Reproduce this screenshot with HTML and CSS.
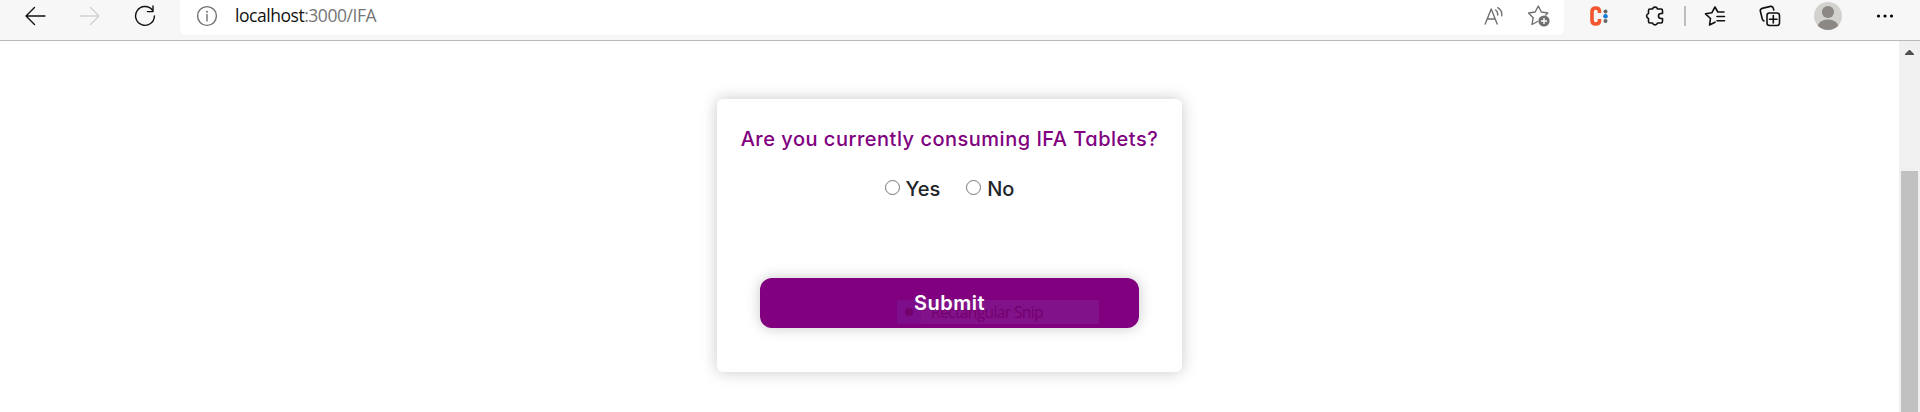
FILE: index.html
```
<!DOCTYPE html>
<html lang="en">
<head>
<meta charset="utf-8">
<title>IFA</title>
<link rel="stylesheet" href="styles.css">
</head>
<body>
<header class="toolbar">
  <nav class="nav">
    <span class="cell"><svg width="22" height="20" viewBox="0 0 22 20"><path class="ink" d="M10.500 1.500L2 10l8.500 8.500M2 10h19"/></svg></span>
    <span class="cell"><svg width="22" height="20" viewBox="0 0 22 20"><path class="pale" d="M11.500 1.500L20 10l-8.500 8.500M20 10H1"/></svg></span>
    <span class="cell"><svg width="22" height="22" viewBox="0 0 22 22"><path class="ink" d="M18.300 5A9.400 9.400 0 1 0 20.400 11M19 1v5.600h-5.600"/></svg></span>
  </nav>
  <div class="address">
    <svg class="info" width="22" height="22" viewBox="0 0 22 22"><circle class="gray" cx="11" cy="11" r="9.400"/><path class="gray" d="M11 9.500V16"/><circle cx="11" cy="6.700" r="1" fill="#707070"/></svg>
    <span class="url">localhost<span class="path">:3000/IFA</span></span>
    <svg class="read" width="22" height="20" viewBox="0 0 22 20"><path class="gray" d="M2.200 18L8.200 3l6 15M4.300 13h7.800M12.500 4q2.500 1.500 2.200 5M14.800 1.700q4.500 2.800 4 8"/></svg>
    <svg class="star" width="24" height="24" viewBox="0 0 24 24"><path class="gray" d="M10.500 17.500L5 20.500l1.200-6.800L1.500 9l6.700-1L11.300 2l3 6 6.500 1-2 2"/><circle cx="17" cy="17" r="5.600" fill="#707070"/><path d="M17 14v6M14 17h6" stroke="#fff" stroke-width="1.400"/></svg>
  </div>
  <div class="tools">
    <span class="cell"><svg width="20" height="22" viewBox="0 0 20 22"><path d="M10.500 8V6.500Q10.500 3 6.800 3Q3 3 3 6.500v9Q3 19 6.800 19q3.700 0 3.700-3.500V14" fill="none" stroke="#f4562e" stroke-width="3.600"/><circle cx="16.500" cy="6.500" r="2" fill="#666"/><circle cx="16.500" cy="11.300" r="2.300" fill="#167bd8"/><circle cx="16.500" cy="16" r="2" fill="#666"/></svg></span>
    <span class="cell"><svg width="22" height="22" viewBox="0 0 22 22"><path class="ink bold" d="M6 4h2.500a2.600 2.600 0 0 1 5 0H17q1.500 0 1.500 1.500v3H17a2.500 2.500 0 0 0 0 5h1.500v3q0 1.500-1.500 1.500h-3.500a2.600 2.600 0 0 1-5 0H6q-1.500 0-1.500-1.500v-3a2.600 2.600 0 0 1 0-5v-3Q4.500 4 6 4"/></svg></span>
    <i class="divider"></i>
    <span class="cell"><svg width="22" height="22" viewBox="0 0 22 22"><path class="ink bold" d="M11 17.200L5.500 20l1-6.500L1.500 8.800l6.300-1L11 2l2.800 5H20M13 11.500h7.500M13 15.800h7.500"/></svg></span>
    <span class="cell mid"><svg width="22" height="22" viewBox="0 0 22 22"><rect class="ink bold" x="8" y="8" width="12.500" height="12.500" rx="2.500"/><path class="ink bold" d="M14.300 10.500v7.500M10.500 14.300H18M5 16Q3.700 15.500 3.300 14L1.300 6Q1 4 3 3.400l8.500-2q2-.4 2.700 1.600L14.800 5"/></svg></span>
    <span class="cell wide"><svg width="28" height="28" viewBox="0 0 28 28"><defs><clipPath id="disc"><circle cx="14" cy="14" r="14"/></clipPath></defs><g clip-path="url(#disc)"><rect width="28" height="28" fill="#d3d2ce"/><circle cx="14" cy="10" r="6.100" fill="#8b8885"/><ellipse cx="14" cy="25" rx="10.500" ry="7.500" fill="#8b8885"/></g></svg></span>
    <span class="cell mid"><svg width="18" height="4" viewBox="0 0 18 4"><circle cx="2.500" cy="2" r="1.600"/><circle cx="9" cy="2" r="1.600"/><circle cx="15.500" cy="2" r="1.600"/></svg></span>
  </div>
</header>
<div class="viewport">
  <main class="page">
    <form class="card">
      <h1 class="question">Are you currently consuming IFA Tablets?</h1>
      <div class="options">
        <label class="option"><input class="radio" type="radio" name="ifa"><span class="yes">Yes</span></label>
        <label class="option"><input class="radio" type="radio" name="ifa"><span class="no">No</span></label>
      </div>
      <button class="submit" type="button"><span class="snip"><i class="mark"></i><span class="snip-text">Rectangular Snip</span></span><span class="label">Submit</span></button>
    </form>
  </main>
  <aside class="scrollbar"><svg class="arrow" width="9" height="5" viewBox="0 0 9 5"><path d="M0 5V4L4 0h1l4 4v1z" fill="#505050"/></svg><div class="thumb"></div></aside>
</div>
</body>
</html>
```
FILE: styles.css
```
* { box-sizing: border-box; }
body { margin: 0; height: 412px; overflow: hidden; background: #fff; display: flex; flex-direction: column; }
svg { display: block; flex: none; }
.ink, .pale, .gray { fill: none; stroke-width: 1.4; stroke-linejoin: round; stroke-linecap: round; }
.ink { stroke: #111; }
.ink.bold { stroke-width: 1.6; }
.pale { stroke: #d2d2d2; }
.gray { stroke: #707070; }

.toolbar { height: 41px; flex: none; display: flex; align-items: flex-start; background: #f7f7f7; border-bottom: 1px solid #b8b8b8; padding: 0 7px; }
.nav, .tools { display: flex; flex: none; height: 31px; align-items: center; }
.nav { width: 173px; }
.tools { margin-left: 7px; }
.cell { width: 56px; display: flex; justify-content: center; flex: none; }
.nav .cell { width: 55px; }
.cell.mid { width: 54px; }
.cell.wide { width: 61px; }
.divider { width: 2px; height: 20px; margin: 0 1px; background: #bdbdbd; }
.address { width: 1384px; flex: none; height: 35px; padding: 0 13px 4px 16px; display: flex; align-items: center; background: #fff; border-radius: 0 0 5px 5px; box-shadow: 0 0 2px #eee; }
.url { margin-left: 17px; font: 17.500px/24px "Open Sans", "Noto Sans", sans-serif; letter-spacing: -0.46px; color: #111; flex: 1; margin-top: -1px; }
.path { color: #767676; }
.star { margin-left: 22px; }

.viewport { flex: 1; display: flex; }
.page { flex: 1; padding-top: 58px; display: flex; justify-content: center; align-items: flex-start; }
.card { width: 465px; height: 273px; padding-top: 24px; display: flex; flex-direction: column; align-items: center; border-radius: 6px; background: #fff; box-shadow: 0 0 16px rgba(0,0,0,.22); font-family: Inter, sans-serif; font-feature-settings: "cv11"; }
.question { margin: 0; font-size: 20px; font-weight: 450; line-height: 32px; letter-spacing: .5px; white-space: nowrap; color: purple; }
.options { display: flex; gap: 26px; margin-top: 18px; height: 32px; }
.option { display: flex; gap: 6px; font-size: 20px; font-weight: 450; line-height: 32px; color: #212529; }
.radio { appearance: none; width: 15px; height: 15px; margin: 7px 0 0; border: 1px solid #767676; border-radius: 50%; background: #fff; }
.submit { position: relative; width: 379px; height: 50px; margin-top: 73px; padding: 0; border: 0; border-radius: 12px; background: purple; box-shadow: 0 0 14px rgba(0,0,0,.22); color: #fff; font: 600 20px/50px Inter, sans-serif; letter-spacing: .5px; }
.label { position: relative; }
.snip { position: absolute; left: 137px; top: 22px; width: 202px; height: 24px; display: flex; align-items: center; background: #821289; color: #74006e; font: 15.500px/24px "Open Sans", sans-serif; }
.mark { width: 24px; height: 24px; background: radial-gradient(circle at 12px 12px, #74006e 4px, #7c0e8c 4.500px); }
.snip-text { margin-left: 10px; letter-spacing: -.6px; }

.scrollbar { width: 21px; background: #f0f0f0; display: flex; flex-direction: column; align-items: center; padding-top: 9px; }
.thumb { width: 17px; flex: 1; margin-top: 116px; background: #c1c1c1; }
```
